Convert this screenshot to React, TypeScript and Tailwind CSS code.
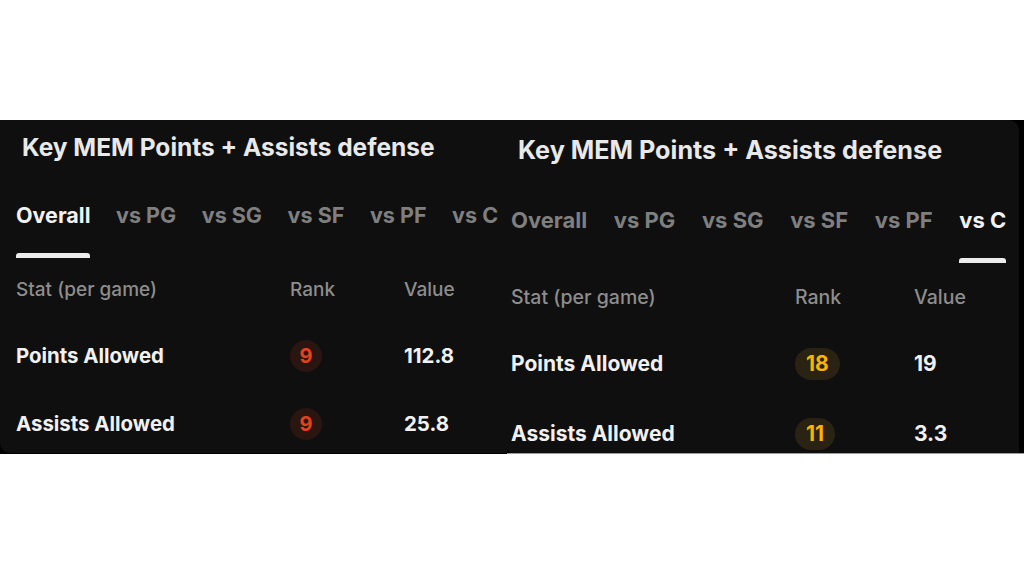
import React from "react";

type Row = { stat: string; rank: number; value: string };

type PanelProps = {
  active: string;
  tone: "red" | "gold";
  rows: Row[];
  big?: boolean;
};

const TABS = ["Overall", "vs PG", "vs SG", "vs SF", "vs PF", "vs C"];

function RankBadge({ rank, tone, big }: { rank: number; tone: "red" | "gold"; big?: boolean }) {
  const colors =
    tone === "red" ? "bg-[#2a1511] text-[#e2421e]" : "bg-[#2a2313] text-[#f7b500]";
  return (
    <span
      className={`inline-flex h-8 items-center justify-center rounded-full font-bold ${colors} ${
        big ? "min-w-[39px] px-[11px] text-[21px]" : "min-w-8 px-[8px] text-[20px]"
      }`}
    >
      {rank}
    </span>
  );
}

function Panel({ active, tone, rows, big }: PanelProps) {
  const rowH = big ? "h-[70px]" : "h-[68px]";
  const rowText = big ? "text-[21px]" : "text-[20.4px]";
  const firstGap = "mt-[20px]";
  const headText = big ? "text-[19.5px] leading-[24px]" : "text-[19px] leading-[24px]";

  return (
    <div className="flex h-full flex-col overflow-hidden">
      <h2
        className={`font-bold text-[#e9e9e9] ${
          big ? "pl-[11px] pt-[15px] text-[25.2px] leading-[30px]" : "pl-[22px] pt-3 text-[24.5px] leading-[30px]"
        }`}
      >
        Key MEM Points + Assists defense
      </h2>

      <div
        className={`flex whitespace-nowrap ${
          big ? "mt-[41px] gap-[26.6px] pl-1 text-[22px]" : "mt-[39px] gap-[25.6px] pl-4 text-[21.5px]"
        }`}
      >
        {TABS.map((t) => (
          <div key={t} className="flex flex-col">
            <span
              className={`font-bold leading-[28px] ${
                t === active ? "text-[#f2f2f2]" : "text-[#7f7f7f]"
              }`}
            >
              {t}
            </span>
            <span
              className={`mt-[24px] h-[5px] rounded-t-[3px] ${
                t === active ? "bg-[#ececec]" : "bg-transparent"
              }`}
            />
          </div>
        ))}
      </div>

      <div
        className={`grid items-center ${
          big
            ? "mt-[22px] grid-cols-[284px_119px_1fr] pl-1"
            : "mt-[20px] grid-cols-[274px_114px_1fr] pl-4"
        }`}
      >
        <span className={`font-medium text-[#8d8d8d] ${headText}`}>Stat (per game)</span>
        <span className={`font-medium text-[#8d8d8d] ${headText}`}>Rank</span>
        <span className={`font-medium text-[#8d8d8d] ${headText}`}>Value</span>

        {rows.map((r, i) => (
          <React.Fragment key={r.stat}>
            <span
              className={`flex items-center font-bold text-[#f1f1f1] ${rowH} ${rowText} ${
                i === 0 ? firstGap : ""
              }`}
            >
              {r.stat}
            </span>
            <span className={`flex items-center ${rowH} ${i === 0 ? firstGap : ""}`}>
              <RankBadge rank={r.rank} tone={tone} big={big} />
            </span>
            <span
              className={`flex items-center font-bold text-[#f1f1f1] ${rowH} ${rowText} ${
                i === 0 ? firstGap : ""
              }`}
            >
              {r.value}
            </span>
          </React.Fragment>
        ))}
      </div>
    </div>
  );
}

export default function App() {
  return (
    <div
      className="h-[576px] w-[1024px] bg-white pt-[120px]"
      style={{ fontFamily: "Inter, 'Noto Sans', sans-serif" }}
    >
      <div className="flex h-[334px] bg-black">
        <div className="h-[333px] w-[507px] rounded-bl-[10px] bg-[#0f0f0f]">
          <Panel
            active="Overall"
            tone="red"
            rows={[
              { stat: "Points Allowed", rank: 9, value: "112.8" },
              { stat: "Assists Allowed", rank: 9, value: "25.8" },
            ]}
          />
        </div>
        <div className="flex flex-1 flex-col">
          <div className="mr-[5px] flex-1 overflow-hidden rounded-tr-[10px] rounded-bl-[6px] bg-[#0f0f0f]">
            <Panel
              big
              active="vs C"
              tone="gold"
              rows={[
                { stat: "Points Allowed", rank: 18, value: "19" },
                { stat: "Assists Allowed", rank: 11, value: "3.3" },
              ]}
            />
          </div>
          <div className="h-px bg-[#9c9c9c]" />
        </div>
      </div>
    </div>
  );
}
